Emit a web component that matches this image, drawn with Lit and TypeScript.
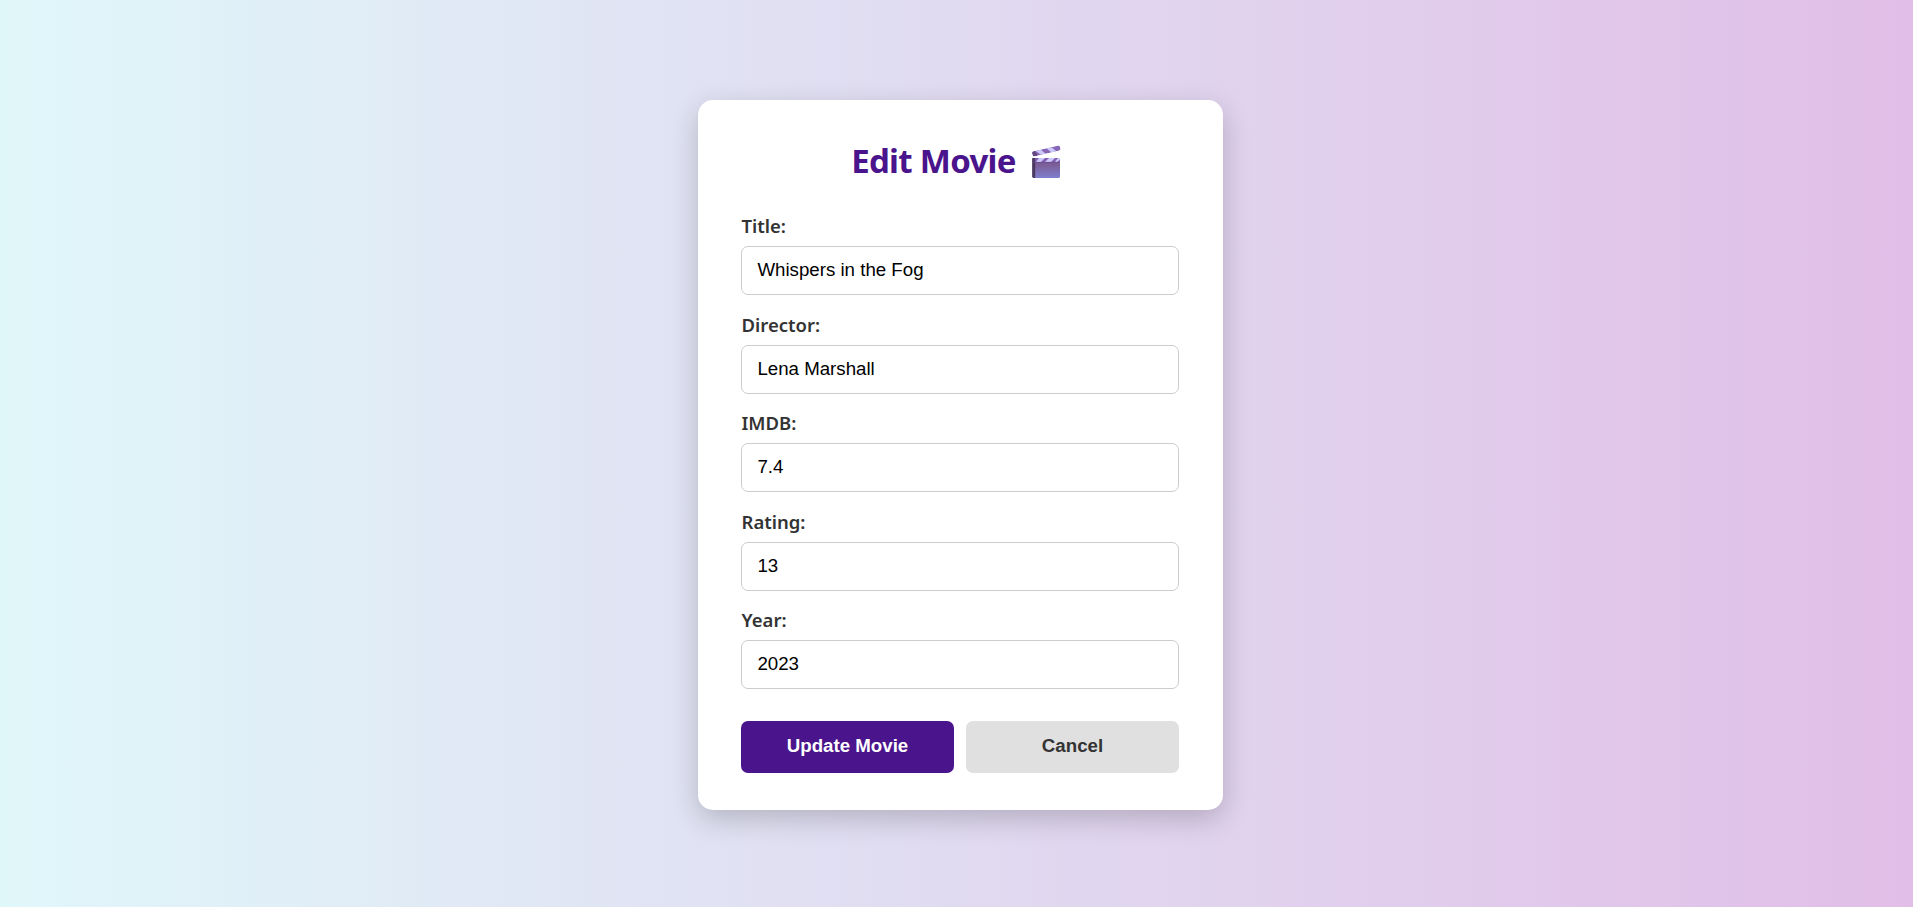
import { LitElement, html, css } from "lit";
import { customElement, state } from "lit/decorators.js";

interface Field {
  id: string;
  label: string;
  value: string;
}

@customElement("app-root")
export class AppRoot extends LitElement {
  static styles = css`
    :host {
      display: block;
      font-family: "Segoe UI", "Noto Sans", sans-serif;
    }
    .page {
      box-sizing: border-box;
      height: 100vh;
      overflow: hidden;
      display: flex;
      justify-content: center;
      align-items: flex-start;
      padding: 100px 0 0 8px;
      background: linear-gradient(to right, #e0f7fa, #e1bee7);
    }
    .card {
      box-sizing: border-box;
      width: 525px;
      height: 710px;
      padding: 40px 44px 37px 43px;
      background: #fff;
      border-radius: 15px;
      box-shadow: 0 9px 28px rgba(0, 0, 0, 0.2);
    }
    .heading {
      display: flex;
      justify-content: center;
      align-items: center;
      height: 43px;
      margin: 0 0 30px;
      padding-right: 8px;
      gap: 15px;
      color: #4a148c;
      font-size: 33px;
      font-weight: 700;
      line-height: 41px;
      letter-spacing: -0.7px;
    }
    .heading-text {
      padding-bottom: 2px;
    }
    .clapper {
      display: block;
      width: 30px;
      height: 34px;
    }
    .field {
      height: 98.5px;
    }
    .label {
      display: block;
      height: 33px;
      padding-left: 0.5px;
      line-height: 25.5px;
      font-size: 18.5px;
      font-weight: 600;
      color: #333;
    }
    .input {
      display: block;
      box-sizing: border-box;
      width: 100%;
      height: 49px;
      padding: 0 15.4px 1px;
      border: 1px solid #ccc;
      border-radius: 7px;
      background: #fff;
      color: #000;
      font: 18.7px "Liberation Sans", Arial, sans-serif;
      outline: none;
    }
    .actions {
      display: flex;
      gap: 12px;
      margin-top: 15.5px;
    }
    .button {
      flex: 1;
      height: 52px;
      padding: 0 0 2px;
      border: none;
      border-radius: 7px;
      font: bold 18.7px "Liberation Sans", Arial, sans-serif;
      background: #e0e0e0;
      color: #333;
    }
    .primary {
      background: #4a148c;
      color: #fff;
    }
  `;

  @state() private fields: Field[] = [
    { id: "title", label: "Title:", value: "Whispers in the Fog" },
    { id: "director", label: "Director:", value: "Lena Marshall" },
    { id: "imdb", label: "IMDB:", value: "7.4" },
    { id: "rating", label: "Rating:", value: "13" },
    { id: "year", label: "Year:", value: "2023" },
  ];

  private clapper() {
    return html`<svg class="clapper" viewBox="0 0 30 34" aria-hidden="true">
      <defs>
        <linearGradient id="board" x1="0" y1="0" x2="0" y2="1">
          <stop offset="0" stop-color="#7a5c98" />
          <stop offset="0.35" stop-color="#7b5f98" />
          <stop offset="1" stop-color="#7f7fd0" />
        </linearGradient>
        <clipPath id="arm"><rect x="0" y="0" width="28.5" height="5.2" rx="2" /></clipPath>
        <clipPath id="bar"><rect x="1.5" y="13" width="27.5" height="5" /></clipPath>
      </defs>
      <rect x="1.5" y="13" width="27.5" height="20" rx="1.5" fill="url(#board)" />
      <path d="M1.2 13h3v20H3a1.8 1.8 0 0 1-1.8-1.8z" fill="#4b3a5e" />
      <g clip-path="url(#bar)">
        <path d="M4.2 13H29v4H4.2z" fill="#8360b4" />
        <path d="M8 13h6l-4 4H5zM18 13h6l-4 4h-6zM27 13h4l-5 4h-2z" fill="#cdc8fa" />
        <path d="M1 17.4h28" stroke="#674689" stroke-width=".8" />
      </g>
      <g transform="translate(.8 6.6) rotate(-13)" clip-path="url(#arm)">
        <path d="M0 0h29v5.2H0z" fill="#8767b5" />
        <path d="M0 0h3l2 5.2H0z" fill="#654780" />
        <path d="M4 0h5l4 5.2H8zM15 0h5l4 5.2h-5z" fill="#cdc8fa" />
      </g>
    </svg>`;
  }

  render() {
    return html`<main class="page">
      <form class="card" @submit=${(e: Event) => e.preventDefault()}>
        <h2 class="heading"><span class="heading-text">Edit Movie</span>${this.clapper()}</h2>
        ${this.fields.map(
          (f) => html`<div class="field">
            <label class="label" for=${f.id}>${f.label}</label>
            <input class="input" id=${f.id} .value=${f.value} />
          </div>`
        )}
        <div class="actions">
          <button class="button primary" type="submit">Update Movie</button>
          <button class="button" type="button">Cancel</button>
        </div>
      </form>
    </main>`;
  }
}
